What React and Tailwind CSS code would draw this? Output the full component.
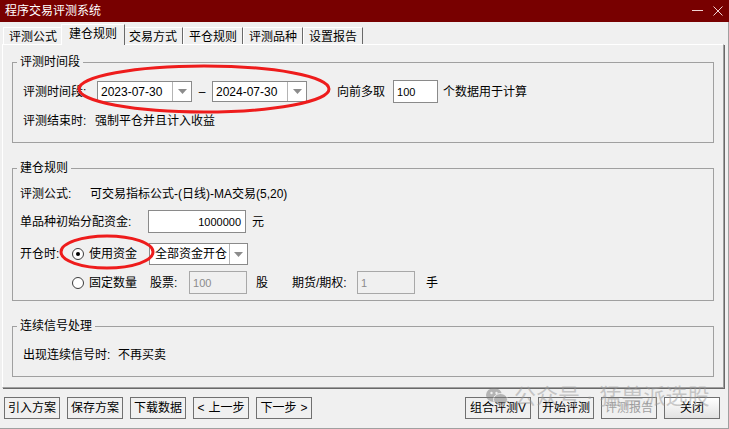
import React from 'react';

const FONT = "font-['Liberation_Sans','Noto_Sans_CJK_SC',sans-serif]";

function Arrow() {
  return (
    <svg width="9" height="5" viewBox="0 0 9 5">
      <path d="M0 0H9L4.5 5Z" fill="#8c8c8c" />
    </svg>
  );
}

function Combo({children, className = '', padText = 'pl-[3px]', arrowW = 'w-[19px]'}) {
  return (
    <div className={`flex border border-[#8a8a8a] bg-white ${className}`}>
      <div className={`flex flex-1 items-center overflow-hidden whitespace-nowrap ${padText}`}>
        {children}
      </div>
      <div className={`flex items-center justify-center border-l border-[#b4b4b4] ${arrowW}`}>
        <Arrow />
      </div>
    </div>
  );
}

function Radio({checked}) {
  return (
    <span className="flex h-[12px] w-[12px] items-center justify-center rounded-full border border-[#3c3c3c] bg-white">
      {checked && <span className="h-[4px] w-[4px] rounded-full bg-black" />}
    </span>
  );
}

function Tab({label, active}) {
  if (active) {
    return (
      <div className="relative z-10 -mx-[2px] -mb-px h-[21px] border-t border-l border-white border-r border-r-[#696969] bg-[#f0f0f0] px-[7px] pt-[2px]">
        {label}
      </div>
    );
  }
  return (
    <div className="h-[17px] border-t border-l border-white border-r border-r-[#696969] px-[5px] pt-[2px]">
      {label}
    </div>
  );
}

function Btn({children, className = '', disabled}) {
  return (
    <div
      className={`flex h-[22px] items-center justify-center border border-[#707070] bg-[#f0f0f0] ${
        disabled ? 'text-[#a0a0a0]' : ''
      } ${className}`}
    >
      {children}
    </div>
  );
}

function Group({title, className = '', children}) {
  return (
    <fieldset className={`w-[702px] border border-[#a0a0a0] ${className}`}>
      <legend className="ml-[4px] px-[3px] leading-[14px]">{title}</legend>
      {children}
    </fieldset>
  );
}

export default function App() {
  const tabs = ['评测公式', '建仓规则', '交易方式', '平仓规则', '评测品种', '设置报告'];
  return (
    <div
      className={`relative flex h-[429px] w-[729px] flex-col overflow-hidden bg-[#f0f0f0] text-[12px] leading-[14px] text-black ${FONT}`}
    >
      {/* title bar */}
      <div className="flex h-[22px] shrink-0 items-center justify-between bg-[#780000] pl-[5px] pr-[6px]">
        <span className="text-[12px] text-white">程序交易评测系统</span>
        <div className="flex items-center gap-[10px]">
          <svg width="11" height="10" viewBox="0 0 11 10">
            <path d="M0 4.5H11" stroke="#f0d2d2" strokeWidth="1" />
          </svg>
          <svg width="10" height="10" viewBox="0 0 10 10">
            <path d="M0.5 0.5L9.5 9.5M9.5 0.5L0.5 9.5" stroke="#f0d2d2" strokeWidth="1" />
          </svg>
        </div>
      </div>

      <div className="flex flex-1 flex-col border-r border-b border-[#a0a0a0]">
        {/* tabs */}
        <div className="flex h-[22px] shrink-0 items-end pl-[3px]">
          {tabs.map((t) => (
            <Tab key={t} label={t} active={t === '建仓规则'} />
          ))}
        </div>

        {/* tab page */}
        <div className="ml-[2px] mr-[4px] h-[344px] shrink-0 border-t border-l border-white border-r border-b border-r-[#a0a0a0] border-b-[#a0a0a0] pl-[9px] pt-[10px] shadow-[1px_1px_0_#696969]">
          <Group title="评测时间段" className="h-[88px]">
            <div className="mt-[11px] flex h-[23px] items-center pl-[10px]">
              <span className="w-[74px]">评测时间段:</span>
              <Combo className="h-[21px] w-[95px]">2023-07-30</Combo>
              <span className="w-[20px] text-center">–</span>
              <Combo className="h-[21px] w-[95px]">2024-07-30</Combo>
              <span className="ml-[30px]">向前多取</span>
              <div className="ml-[8px] h-[23px] w-[45px] border border-[#8a8a8a] bg-white pl-[3px] pt-[4px] text-[11px]">
                100
              </div>
              <span className="ml-[5px]">个数据用于计算</span>
            </div>
            <div className="mt-[11px] flex pl-[10px]">
              <span className="w-[72px]">评测结束时:</span>
              <span>强制平仓并且计入收益</span>
            </div>
          </Group>

          <Group title="建仓规则" className="mt-[18px] h-[140px]">
            <div className="mt-[12px] flex pl-[7px]">
              <span className="w-[70px]">评测公式:</span>
              <span>可交易指标公式-(日线)-MA交易(5,20)</span>
            </div>
            <div className="mt-[9px] flex h-[23px] items-center pl-[7px]">
              <span className="w-[128px]">单品种初始分配资金:</span>
              <div className="flex h-[23px] w-[98px] items-center justify-end border border-[#8a8a8a] bg-white pr-[4px] text-[11px]">
                1000000
              </div>
              <span className="ml-[6px]">元</span>
            </div>
            <div className="mt-[10px] flex h-[22px] items-center pl-[7px]">
              <span className="w-[52px]">开仓时:</span>
              <Radio checked />
              <span className="ml-[5px]">使用资金</span>
              <Combo className="ml-[12px] h-[22px] w-[99px]" padText="pl-[5px]" arrowW="w-[18px]">
                全部资金开仓
              </Combo>
            </div>
            <div className="mt-[6px] flex h-[23px] items-center pl-[7px]">
              <span className="w-[52px]" />
              <Radio />
              <span className="ml-[5px]">固定数量</span>
              <span className="ml-[13px] w-[39px]">股票:</span>
              <div className="h-[23px] w-[58px] border border-[#a8a8a8] bg-[#f0f0f0] pl-[3px] pt-[4px] text-[11px] text-[#8c8c8c]">
                100
              </div>
              <span className="ml-[9px]">股</span>
              <span className="ml-[24px] w-[65px]">期货/期权:</span>
              <div className="h-[23px] w-[58px] border border-[#a8a8a8] bg-[#f0f0f0] pl-[3px] pt-[4px] text-[11px] text-[#8c8c8c]">
                1
              </div>
              <span className="ml-[11px]">手</span>
            </div>
          </Group>

          <Group title="连续信号处理" className="mt-[18px] h-[58px]">
            <div className="mt-[15px] flex pl-[10px]">
              <span className="w-[95px]">出现连续信号时:</span>
              <span>不再买卖</span>
            </div>
          </Group>
        </div>

        {/* buttons */}
        <div className="mt-[9px] flex h-[22px] shrink-0 pl-[4px] pr-[8px]">
          <div className="flex gap-[7px]">
            <Btn className="w-[56px]">引入方案</Btn>
            <Btn className="w-[56px]">保存方案</Btn>
            <Btn className="w-[56px]">下载数据</Btn>
            <Btn className="w-[56px] gap-[4px]">
              <span>&lt;</span>
              <span>上一步</span>
            </Btn>
            <Btn className="w-[56px] gap-[4px]">
              <span>下一步</span>
              <span>&gt;</span>
            </Btn>
          </div>
          <div className="ml-auto flex gap-[7px]">
            <Btn className="w-[66px]">组合评测V</Btn>
            <Btn className="w-[56px]">开始评测</Btn>
            <Btn className="w-[56px]" disabled>
              评测报告
            </Btn>
            <Btn className="w-[56px] bg-linear-to-b from-white to-[#e2e2e2]">关闭</Btn>
          </div>
        </div>
      </div>

      {/* red annotation rings */}
      <svg className="pointer-events-none absolute left-0 top-0" width="729" height="429">
        <ellipse cx="204" cy="89" rx="125" ry="23" fill="none" stroke="#ee1c1c" strokeWidth="3" />
        <ellipse cx="107" cy="252" rx="46" ry="16" fill="none" stroke="#ee1c1c" strokeWidth="3" />
      </svg>

      {/* watermark */}
      <div className="pointer-events-none absolute left-[486px] top-[384px] flex items-center gap-[6px] text-[22px] leading-[26px] text-[#9a9a9a] opacity-50">
        <svg width="22" height="20" viewBox="0 0 22 20">
          <ellipse cx="8" cy="8" rx="8" ry="7" fill="#7a7a7a" />
          <ellipse cx="14.5" cy="12.5" rx="7" ry="6" fill="#7a7a7a" stroke="#f0f0f0" strokeWidth="1" />
          <circle cx="5.5" cy="6" r="1.2" fill="#f0f0f0" />
          <circle cx="10.5" cy="6" r="1.2" fill="#f0f0f0" />
        </svg>
        <span>公众号 · 猛兽派选股</span>
      </div>
    </div>
  );
}
